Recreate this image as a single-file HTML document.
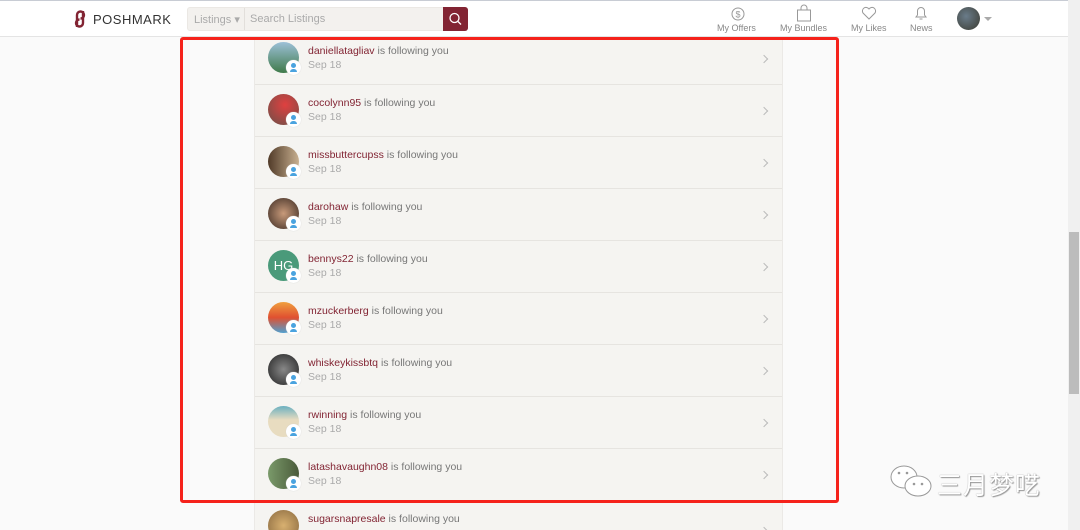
<!DOCTYPE html>
<html><head><meta charset="utf-8"><style>
*{margin:0;padding:0;box-sizing:border-box}
html{overflow:hidden;width:1080px;height:530px}
body{width:1080px;height:530px;overflow:hidden;background:#fafafa;font-family:"Liberation Sans",Arial,sans-serif;position:relative}
.hdr{position:absolute;left:0;top:0;width:1068px;height:37px;background:#fff;border-bottom:1px solid #e4e4e4;border-top:1px solid #c8ccd4}
.logo{position:absolute;left:72px;top:9px;font-size:13px;color:#333;letter-spacing:.5px;display:flex;align-items:center;gap:5px}
.search{position:absolute;left:187px;top:6px;width:281px;height:24px;background:#f3f1ee;border:1px solid #ebe8e4;border-radius:3px;font-size:11px;color:#aaa}
.search .l{position:absolute;left:6px;top:5px}
.search .div{position:absolute;left:56px;top:0;width:1px;height:22px;background:#e2dfdb}
.search .p{position:absolute;left:62px;top:5px}
.search .b{position:absolute;right:-1px;top:-1px;width:25px;height:24px;background:#822433;border-radius:0 3px 3px 0}
.nav{position:absolute;top:22px;font-size:9px;color:#888}
.col{position:absolute;left:254px;top:37px;width:529px;height:493px;overflow:hidden;background:#f5f4f1;border-left:1px solid #ebe9e6;border-right:1px solid #ebe9e6}
.row{position:absolute;left:0;width:527px;height:52px;border-bottom:1px solid #e6e4e0}
.av{position:absolute;left:13px;top:9px;width:31px;height:31px;border-radius:50%}
.badge{position:absolute;left:31px;top:27px;width:15px;height:15px;border-radius:50%;background:#fff;box-shadow:0 0 1px #ccc}
.badge:after{content:"";position:absolute;left:5px;top:3px;width:5px;height:5px;border-radius:50%;background:#4aa3df}
.badge:before{content:"";position:absolute;left:4px;top:9px;width:7px;height:3px;border-radius:3px 3px 0 0;background:#4aa3df}
.t{position:absolute;left:53px;top:12px;font-size:10.5px;color:#777}
.t b{font-weight:normal;color:#822433}
.d{position:absolute;left:53px;top:26px;font-size:10.5px;color:#aaa}
.ch{position:absolute;right:15px;top:23px;width:6px;height:6px;border-right:1px solid #bbb;border-top:1px solid #bbb;transform:rotate(45deg)}
.red{position:absolute;left:180px;top:37px;width:659px;height:466px;border:3px solid #f5221b;border-radius:3px}
.sb{position:absolute;left:1068px;top:0;width:12px;height:530px;background:#f0f0f0}
.th{position:absolute;left:1069px;top:232px;width:10px;height:162px;background:#bcbcbc}
.wm{position:absolute;left:937px;top:466px;font-size:25px;color:#fff;font-family:"Noto Sans CJK SC",sans-serif;text-shadow:0 0 1px #888,1px 1px 1px #999;letter-spacing:1px}
</style></head><body>
<div class="hdr">
 <div class="logo"><svg width="16" height="18" viewBox="0 0 16 18"><path d="M5 17V5a3.5 3.5 0 1 1 3.5 3.5M11 1v12a3.5 3.5 0 1 1-3.5-3.5" fill="none" stroke="#822433" stroke-width="2.4"/></svg>POSHMARK</div>
 <div class="search"><span class="l">Listings ▾</span><span class="div"></span><span class="p">Search Listings</span><div class="b"><svg width="25" height="24"><circle cx="11.5" cy="11" r="4.5" fill="none" stroke="#fff" stroke-width="1.3"/><path d="M15 14.5l3 3" stroke="#fff" stroke-width="1.3"/></svg></div></div>
 <svg style="position:absolute;left:731px;top:6px" width="14" height="14"><circle cx="7" cy="7" r="6" fill="none" stroke="#999"/><text x="4.5" y="10.5" font-size="9" fill="#999" font-family="Liberation Sans">$</text></svg>
 <span class="nav" style="left:717px">My Offers</span>
 <svg style="position:absolute;left:796px;top:3px" width="16" height="18"><path d="M1.5 6h13v11h-13z M5 6V4a3 3 0 0 1 6 0v2" fill="none" stroke="#999"/></svg>
 <span class="nav" style="left:780px">My Bundles</span>
 <svg style="position:absolute;left:861px;top:5px" width="16" height="14"><path d="M8 13L2 7a3.3 3.3 0 0 1 6-4a3.3 3.3 0 0 1 6 4z" fill="none" stroke="#999"/></svg>
 <span class="nav" style="left:851px">My Likes</span>
 <svg style="position:absolute;left:914px;top:4px" width="14" height="16"><path d="M2 12h10l-1.5-2V6a3.5 3.5 0 0 0-7 0v4z M5.5 14h3" fill="none" stroke="#999"/></svg>
 <span class="nav" style="left:910px">News</span>
 <div style="position:absolute;left:957px;top:6px;width:23px;height:23px;border-radius:50%;background:radial-gradient(circle at 40% 40%,#6a7c8a,#3a3a30)"></div>
 <div style="position:absolute;left:984px;top:16px;border:4px solid transparent;border-top-color:#aaa"></div>
</div>
<div class="col">
 <div class="row" style="top:-4px"><div class="av" style="background:linear-gradient(#9cc0d8,#3f7a4a)"></div><div class="badge"></div><div class="t"><b>daniellatagliav</b> is following you</div><div class="d">Sep 18</div><div class="ch"></div></div>
 <div class="row" style="top:48px"><div class="av" style="background:radial-gradient(circle at 55% 35%,#e04040,#6a5048)"></div><div class="badge"></div><div class="t"><b>cocolynn95</b> is following you</div><div class="d">Sep 18</div><div class="ch"></div></div>
 <div class="row" style="top:100px"><div class="av" style="background:linear-gradient(90deg,#503a28,#c8b090)"></div><div class="badge"></div><div class="t"><b>missbuttercupss</b> is following you</div><div class="d">Sep 18</div><div class="ch"></div></div>
 <div class="row" style="top:152px"><div class="av" style="background:radial-gradient(#c89a7a,#3a2a22)"></div><div class="badge"></div><div class="t"><b>darohaw</b> is following you</div><div class="d">Sep 18</div><div class="ch"></div></div>
 <div class="row" style="top:204px"><div class="av" style="background:#4a9a7a;color:#fff;font-size:13px;text-align:center;line-height:31px">HG</div><div class="badge"></div><div class="t"><b>bennys22</b> is following you</div><div class="d">Sep 18</div><div class="ch"></div></div>
 <div class="row" style="top:256px"><div class="av" style="background:linear-gradient(#f0a040,#e05030 50%,#50a0d0)"></div><div class="badge"></div><div class="t"><b>mzuckerberg</b> is following you</div><div class="d">Sep 18</div><div class="ch"></div></div>
 <div class="row" style="top:308px"><div class="av" style="background:radial-gradient(#888,#222)"></div><div class="badge"></div><div class="t"><b>whiskeykissbtq</b> is following you</div><div class="d">Sep 18</div><div class="ch"></div></div>
 <div class="row" style="top:360px"><div class="av" style="background:linear-gradient(#6ab0c0,#e8dcc0 45%)"></div><div class="badge"></div><div class="t"><b>rwinning</b> is following you</div><div class="d">Sep 18</div><div class="ch"></div></div>
 <div class="row" style="top:412px"><div class="av" style="background:linear-gradient(90deg,#7a9a6a,#4a5a3a)"></div><div class="badge"></div><div class="t"><b>latashavaughn08</b> is following you</div><div class="d">Sep 18</div><div class="ch"></div></div>
 <div class="row" style="top:464px"><div class="av" style="background:radial-gradient(#d8b070,#8a6a40)"></div><div class="t"><b>sugarsnapresale</b> is following you</div><div class="ch" style="top:27px"></div></div>
</div>
<div class="red"></div>
<svg style="position:absolute;left:889px;top:462px" width="46" height="38"><ellipse cx="15" cy="15" rx="13" ry="11" fill="#fff" stroke="#999"/><ellipse cx="29" cy="24" rx="13" ry="10" fill="#fff" stroke="#999"/><circle cx="10" cy="11" r="1.3" fill="#999"/><circle cx="18" cy="11" r="1.3" fill="#999"/><circle cx="25" cy="22" r="1.3" fill="#999"/><circle cx="33" cy="22" r="1.3" fill="#999"/></svg>
<div class="wm">三月梦呓</div>
<div class="sb"></div><div class="th"></div>
</body></html>
